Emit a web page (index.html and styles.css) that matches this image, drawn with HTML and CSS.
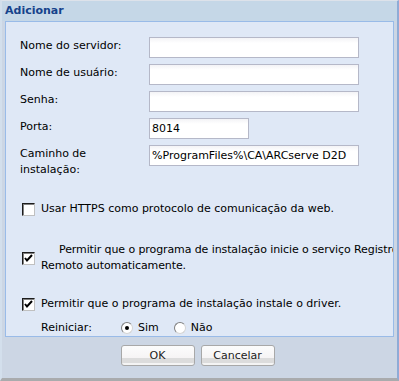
FILE: index.html
```html
<!DOCTYPE html>
<html lang="pt">
<head>
  <meta charset="UTF-8" />
  <title>Adicionar</title>
  <link rel="stylesheet" href="styles.css">
</head>
<body>
  <div class="window">
    <div class="header">Adicionar</div>

    <div class="panel">
      <div class="fields">
        <label class="lbl">Nome do servidor:</label>
        <div class="txt wide"></div>

        <label class="lbl">Nome de usuário:</label>
        <div class="txt wide"></div>

        <label class="lbl">Senha:</label>
        <div class="txt wide"></div>

        <label class="lbl">Porta:</label>
        <div class="txt short">8014</div>

        <label class="lbl">Caminho de<br>instalação:</label>
        <div class="txt wide">%ProgramFiles%\CA\ARCserve D2D</div>
      </div>

      <div class="check first">
        <span class="box"></span>
        <span class="check-text">Usar HTTPS como protocolo de comunicação da web.</span>
      </div>

      <div class="check second">
        <span class="box on">
          <svg width="9" height="9" viewBox="0 0 9 9"><path d="M1 4 L3 6.5 L8 1" fill="none" stroke="#000" stroke-width="2"/></svg>
        </span>
        <span class="check-text indent">Permitir que o programa de instalação inicie o serviço Registro<br>Remoto automaticamente.</span>
      </div>

      <div class="check third">
        <span class="box on">
          <svg width="9" height="9" viewBox="0 0 9 9"><path d="M1 4 L3 6.5 L8 1" fill="none" stroke="#000" stroke-width="2"/></svg>
        </span>
        <span class="check-text">Permitir que o programa de instalação instale o driver.</span>
      </div>

      <div class="restart">
        <span class="restart-lbl">Reiniciar:</span>
        <span class="radio on"></span><span class="radio-text">Sim</span>
        <span class="radio"></span><span class="radio-text">Não</span>
      </div>
    </div>

    <div class="footer">
      <button class="btn">OK</button>
      <button class="btn">Cancelar</button>
    </div>
  </div>
</body>
</html>
```

FILE: styles.css
```css
* { margin: 0; padding: 0; box-sizing: border-box; }

body {
  font-family: "DejaVu Sans", sans-serif;
  font-size: 11px;
  color: #000;
  background: #ccd6e4;
}

.window {
  width: 399px; height: 381px;
  display: flex; flex-direction: column;
  background: #ccd6e4;
  border-top: 1px solid #dde2ea;
  border-left: 2px solid #d3dfec;
  border-right: 2px solid #8fabd6;
  border-bottom: 3px solid #a9abad;
  overflow: hidden;
}

.header {
  height: 20px;
  background: #c5d7e7;
  color: #15428b;
  font-weight: bold;
  line-height: 20px;
  margin: 0 -2px 0 -2px;
  padding-left: 5px;
}

.panel {
  margin: 0 3px 0 3px;
  height: 316px;
  background: #dfe8f6;
  border: 1px solid #99bbe8;
  overflow: hidden;
  padding: 15px 0 0 14px;
}

.fields {
  display: grid;
  grid-template-columns: 129px auto;
  grid-auto-rows: 27px;
  align-items: start;
}

.lbl {
  line-height: 16px;
  padding-top: 1px;
}

.txt {
  height: 21px;
  border: 1px solid #b5b8c8;
  background: linear-gradient(#f3f3f6, #fff 5px);
  line-height: 19px;
  padding-left: 2px;
  white-space: nowrap;
}
.txt.wide { width: 210px; }
.txt.short { width: 100px; }

.check {
  display: flex; align-items: center;
  padding-left: 2px;
  white-space: nowrap;
}
.check.first { margin-top: 29px; }
.check.second { margin-top: 25px; }
.check.third { margin-top: 22px; }

.box {
  width: 13px; height: 13px;
  flex: none;
  border: 1px solid #1c1c1c;
  border-right-color: #c0c0c0; border-bottom-color: #c0c0c0;
  box-shadow: inset 1px 1px 0 #808080;
  background: #fff;
  display: flex; align-items: center; justify-content: center;
  margin-right: 6px;
}

.check-text { line-height: 16px; }
.check-text.indent { text-indent: 18px; letter-spacing: -0.1px; }

.restart {
  display: flex; align-items: center;
  margin-top: 8px;
  padding-left: 21px;
  line-height: 16px;
}
.restart-lbl { width: 80px; }

.radio {
  width: 12px; height: 12px;
  border-radius: 50%;
  border: 1px solid #7f7f7f;
  border-right-color: #d4d4d4; border-bottom-color: #d4d4d4;
  background: #fff;
  display: flex; align-items: center; justify-content: center;
  margin-right: 5px;
}
.radio.on::after {
  content: "";
  width: 4px; height: 4px;
  border-radius: 50%;
  background: #000;
}
.radio-text { margin-right: 15px; }

.footer {
  flex: 1;
  display: flex; justify-content: center;
  gap: 6px;
  padding-top: 8px;
  padding-right: 4px;
}

.btn {
  width: 74px; height: 21px;
  font-family: "DejaVu Sans", sans-serif;
  font-size: 11px;
  color: #222;
  border: 1px solid #a8a8a8;
  border-radius: 3px;
  background: linear-gradient(#fcfcfc, #f6f4f5 62%, #dcdcdc 62%, #dcdcdc 88%, #f4f4f4 88%);
}
```
